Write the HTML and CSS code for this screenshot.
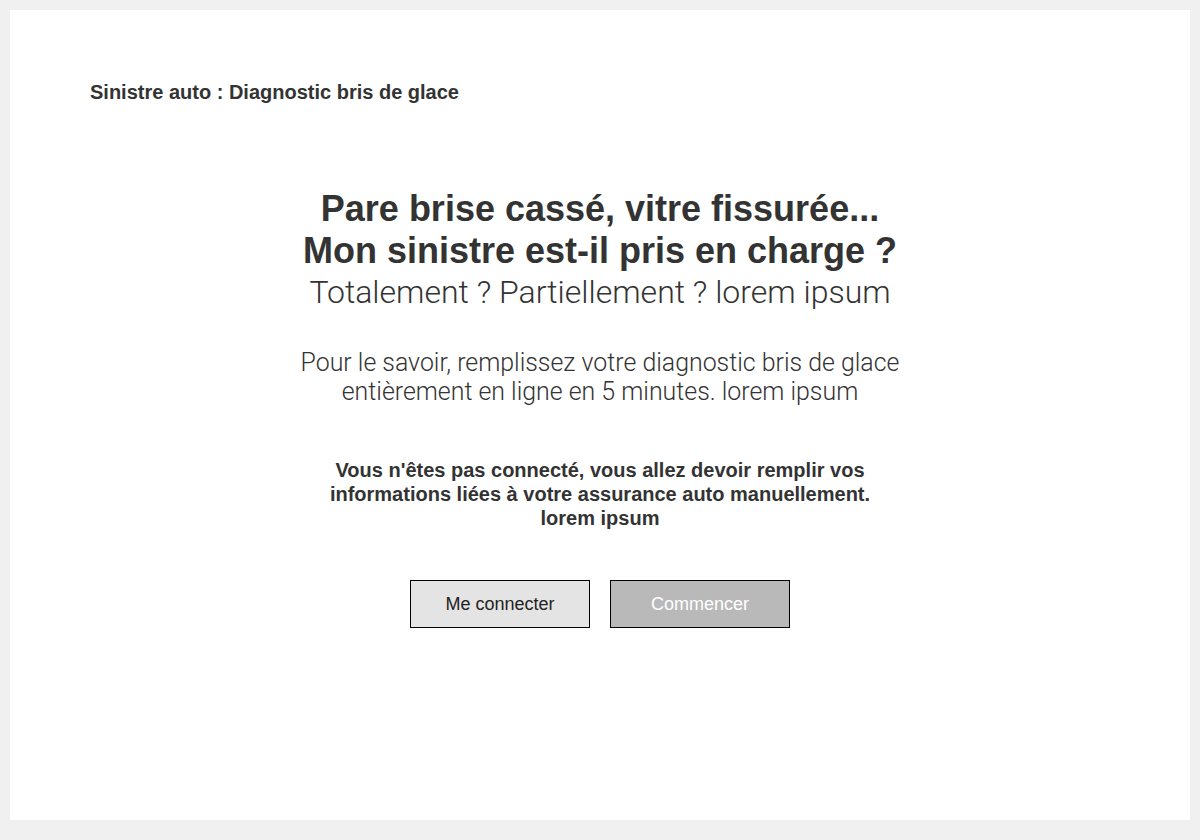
FILE: index.html
```html
<!DOCTYPE html>
<html lang="fr">

<head>
    <meta charset="UTF-8">
    <meta name="viewport" content="width=device-width, initial-scale=1.0">
    <title>Sinistre auto : Diagnostic bris de glace</title>
    <link rel="stylesheet" href="styles.css">
</head>

<body>
    <div id="page">
        <h4 class="page-title">Sinistre auto : Diagnostic bris de glace</h4>

        <div class="intro">
            <h1>Pare brise cassé, vitre fissurée...<br>Mon sinistre est-il pris en charge ?</h1>
            <p class="subtitle">Totalement ? Partiellement ? lorem ipsum</p>
            <p class="lead">Pour le savoir, remplissez votre diagnostic bris de glace<br>entièrement en ligne en 5 minutes. lorem ipsum</p>
            <p class="notice">Vous n'êtes pas connecté, vous allez devoir remplir vos<br>informations liées à votre assurance auto manuellement.<br>lorem ipsum</p>

            <div class="actions">
                <button class="btn btn-login">Me connecter</button>
                <button class="btn btn-start">Commencer</button>
            </div>
        </div>
    </div>
</body>

</html>
```

FILE: styles.css
```css
* {
    margin: 0;
    padding: 0;
    box-sizing: border-box;
}

body {
    background-color: #f0f0f0;
    padding: 10px;
    font-family: "Liberation Sans", Arial, sans-serif;
    color: #333;
}

#page {
    background-color: #fff;
    height: 810px;
    padding: 71px 80px 0;
}

.page-title {
    font-size: 20px;
    line-height: 22px;
    font-weight: bold;
}

.intro {
    text-align: center;
    margin-top: 85px;
}

.intro h1 {
    font-size: 36px;
    line-height: 42px;
    font-weight: bold;
}

.subtitle {
    font-family: Roboto, "Liberation Sans", sans-serif;
    font-weight: 300;
    font-size: 32px;
    line-height: 40px;
}

.lead {
    font-family: Roboto, "Liberation Sans", sans-serif;
    font-weight: 300;
    font-size: 24.9px;
    line-height: 29px;
    margin-top: 36px;
}

.notice {
    font-size: 20px;
    line-height: 24px;
    font-weight: bold;
    margin-top: 52px;
}

.actions {
    display: flex;
    justify-content: center;
    gap: 20px;
    margin-top: 50px;
}

.btn {
    width: 180px;
    height: 48px;
    border: 1px solid #000;
    font-family: "Liberation Sans", Arial, sans-serif;
    font-size: 18px;
}

.btn-login {
    background-color: #e4e4e4;
    color: #222;
}

.btn-start {
    background-color: #b9b9b9;
    color: #fff;
}
```
